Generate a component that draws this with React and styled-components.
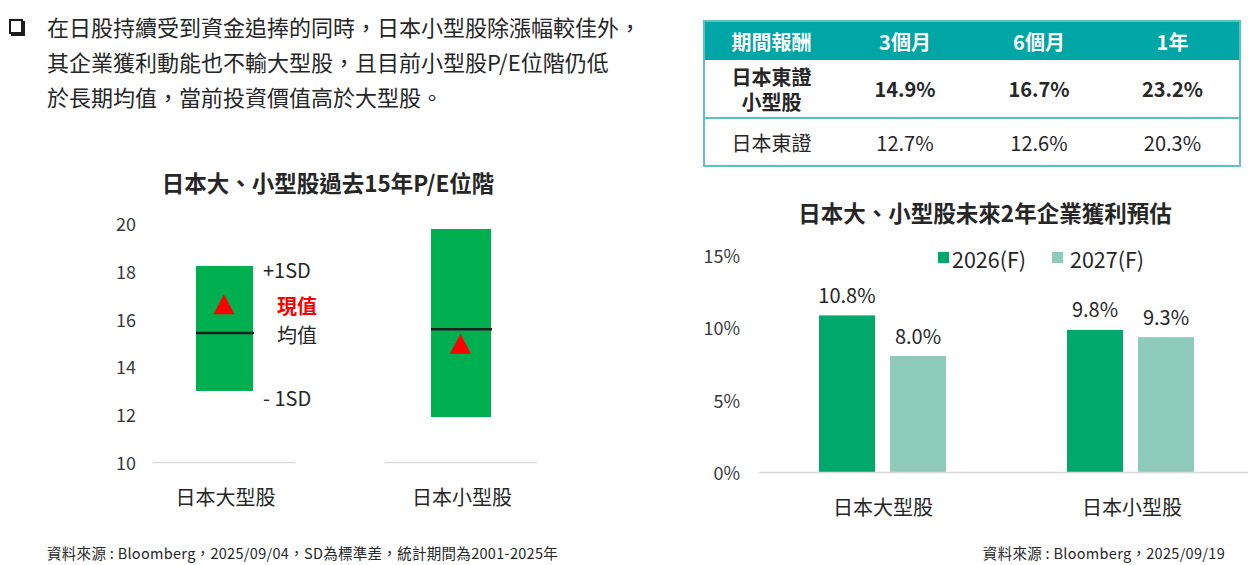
import styled, { createGlobalStyle } from "styled-components";

const GlobalStyle = createGlobalStyle`
  html, body {
    margin: 0;
    padding: 0;
    background: #fff;
  }
  body {
    font-family: "Noto Sans CJK TC", "Noto Sans", sans-serif;
    color: #262626;
  }
`;

const introLines = [
  "在日股持續受到資金追捧的同時，日本小型股除漲幅較佳外，",
  "其企業獲利動能也不輸大型股，且目前小型股P/E位階仍低",
  "於長期均值，當前投資價值高於大型股。",
];

const returnsTable = {
  head: ["期間報酬", "3個月", "6個月", "1年"],
  rows: [
    { label: ["日本東證", "小型股"], values: ["14.9%", "16.7%", "23.2%"], strong: true },
    { label: ["日本東證"], values: ["12.7%", "12.6%", "20.3%"], strong: false },
  ],
};

// P/E chart: y = 265 - (pe - 10) * 23.9 inside the svg
const peY = (v) => 265 - (v - 10) * 23.9;
const peBands = [
  { name: "日本大型股", x: 96, w: 57, hi: 18.2, lo: 12.97, mean: 15.4, now: 16.6, cx: 125.5 },
  { name: "日本小型股", x: 331, w: 60, hi: 19.75, lo: 11.88, mean: 15.55, now: 14.95, cx: 362 },
];

// earnings chart: 0% at y 245, 14.5px per percent
const epsY = (v) => 245 - v * 14.5;
const epsGroups = [
  { name: "日本大型股", cx: 183, bars: [{ x: 119, v: 10.8 }, { x: 190, v: 8.0 }] },
  { name: "日本小型股", cx: 432, bars: [{ x: 367, v: 9.8 }, { x: 438, v: 9.3 }] },
];
const epsColors = ["#00a86b", "#8fcbbb"];

function PeChart() {
  return (
    <svg width="456" height="325" viewBox="0 0 456 325">
      {[20, 18, 16, 14, 12, 10].map((t) => (
        <AxisText key={t} x="36" y={peY(t)} textAnchor="end" dominantBaseline="central">
          {t}
        </AxisText>
      ))}
      <line x1="53" x2="195" y1="265.5" y2="265.5" stroke="#d9d9d9" strokeWidth="1.5" />
      <line x1="285" x2="437" y1="265.5" y2="265.5" stroke="#d9d9d9" strokeWidth="1.5" />
      {peBands.map((b) => {
        const top = peY(b.hi);
        const ny = peY(b.now);
        return (
          <g key={b.name}>
            <rect x={b.x} y={top} width={b.w} height={peY(b.lo) - top} fill="#00b050" />
            <line x1={b.x} x2={b.x + b.w + 1} y1={peY(b.mean)} y2={peY(b.mean)} stroke="#1f1f1f" strokeWidth="2.5" />
            <polygon
              points={`${b.cx - 1.5 - 10.5},${ny + 10} ${b.cx - 1.5 + 10.5},${ny + 10} ${b.cx - 1.5},${ny - 10}`}
              fill="#ff0000"
            />
            <LabelText x={b.cx} y="299" textAnchor="middle" dominantBaseline="central">
              {b.name}
            </LabelText>
          </g>
        );
      })}
      <LabelText x="163" y="72" dominantBaseline="central">+1SD</LabelText>
      <LabelText x="177" y="108" dominantBaseline="central" $color="#ff0000" $bold>現值</LabelText>
      <LabelText x="177" y="137" dominantBaseline="central">均值</LabelText>
      <LabelText x="163" y="200" dominantBaseline="central">- 1SD</LabelText>
    </svg>
  );
}

function EpsChart() {
  return (
    <svg width="548" height="297" viewBox="0 0 548 297">
      {[15, 10, 5, 0].map((t) => (
        <AxisText key={t} x="40" y={epsY(t)} textAnchor="end" dominantBaseline="central">
          {t}%
        </AxisText>
      ))}
      <rect x="238" y="25" width="11" height="11" fill={epsColors[0]} />
      <LabelText x="252" y="31" dominantBaseline="central" $size={21.5}>2026(F)</LabelText>
      <rect x="352" y="25" width="11" height="11" fill={epsColors[1]} />
      <LabelText x="370" y="31" dominantBaseline="central" $size={21.5}>2027(F)</LabelText>
      {epsGroups.map((g) => (
        <g key={g.name}>
          {g.bars.map((b, i) => (
            <g key={b.x}>
              <rect x={b.x} y={epsY(b.v)} width="56" height={b.v * 14.5} fill={epsColors[i]} />
              <LabelText x={b.x + 28} y={epsY(b.v) - 21} textAnchor="middle" dominantBaseline="central">
                {b.v.toFixed(1)}%
              </LabelText>
            </g>
          ))}
          <LabelText x={g.cx} y="279" textAnchor="middle" dominantBaseline="central">
            {g.name}
          </LabelText>
        </g>
      ))}
      <line x1="59" x2="548" y1="245.5" y2="245.5" stroke="#d9d9d9" strokeWidth="1.5" />
    </svg>
  );
}

export default function App() {
  return (
    <Page>
      <GlobalStyle />
      <Main>
        <LeftCol>
          <Intro>
            <Bullet />
            <IntroText>
              {introLines.map((l) => (
                <div key={l}>{l}</div>
              ))}
            </IntroText>
          </Intro>
          <PeBlock>
            <ChartTitle>日本大、小型股過去15年P/E位階</ChartTitle>
            <PeChart />
          </PeBlock>
        </LeftCol>
        <RightCol>
          <Table>
            <thead>
              <tr>
                {returnsTable.head.map((h) => (
                  <HeadCell key={h}>{h}</HeadCell>
                ))}
              </tr>
            </thead>
            <tbody>
              {returnsTable.rows.map((r, ri) => (
                <Row key={r.label.join("")} $strong={r.strong}>
                  <Cell $divider={ri > 0}>
                    {r.label.map((l) => (
                      <div key={l}>{l}</div>
                    ))}
                  </Cell>
                  {r.values.map((v, i) => (
                    <Cell key={i} $divider={ri > 0}>
                      {v}
                    </Cell>
                  ))}
                </Row>
              ))}
            </tbody>
          </Table>
          <EpsBlock>
            <ChartTitle $shift={22}>日本大、小型股未來2年企業獲利預估</ChartTitle>
            <EpsChart />
          </EpsBlock>
        </RightCol>
      </Main>
      <Footer>
        <Note>資料來源 : Bloomberg，2025/09/04，SD為標準差，統計期間為2001-2025年</Note>
        <Note>資料來源 : Bloomberg，2025/09/19</Note>
      </Footer>
    </Page>
  );
}

const Page = styled.div`
  width: 1248px;
  height: 565px;
  display: flex;
  flex-direction: column;
  overflow: hidden;
`;

const Main = styled.div`
  display: grid;
  grid-template-columns: 700px 548px;
  flex: 1;
`;

const LeftCol = styled.div`
  display: flex;
  flex-direction: column;
`;

const Intro = styled.div`
  display: flex;
  align-items: flex-start;
  padding: 9px 0 0 9px;
`;

const Bullet = styled.span`
  width: 10px;
  height: 11px;
  margin-top: 10px;
  border: 2px solid #1a1a1a;
  box-shadow: 2px 2px 0 #1a1a1a;
  flex: none;
`;

const IntroText = styled.div`
  margin-left: 24px;
  font-size: 22px;
  line-height: 35px;
  color: #262626;
  white-space: nowrap;
`;

const PeBlock = styled.div`
  margin: 53px 0 0 100px;
  width: 456px;
`;

const ChartTitle = styled.div`
  font-size: 22.5px;
  line-height: 30px;
  font-weight: 700;
  color: #262626;
  text-align: center;
  padding-left: ${(p) => (p.$shift ? `${p.$shift}px` : 0)};
`;

const AxisText = styled.text`
  font-family: "Noto Sans CJK TC", "Noto Sans", sans-serif;
  font-size: 18px;
  fill: #3a3a3a;
`;

const LabelText = styled.text`
  font-family: "Noto Sans CJK TC", "Noto Sans", sans-serif;
  font-size: ${(p) => p.$size || 20}px;
  font-weight: ${(p) => (p.$bold ? 700 : 400)};
  fill: ${(p) => p.$color || "#262626"};
`;

const RightCol = styled.div`
  display: flex;
  flex-direction: column;
  padding-top: 20px;
`;

const Table = styled.table`
  margin-left: 3px;
  width: 538px;
  border-collapse: collapse;
  table-layout: fixed;
  border: 2px solid #5cc2c2;
`;

const HeadCell = styled.th`
  height: 38px;
  padding: 0;
  background: #00a5a5;
  color: #fff;
  font-size: 20px;
  font-weight: 700;
  text-align: center;
`;

const Row = styled.tr`
  height: ${(p) => (p.$strong ? "58px" : "48px")};
  font-weight: ${(p) => (p.$strong ? 700 : 400)};
`;

const Cell = styled.td`
  padding: 0;
  text-align: center;
  font-size: 20px;
  line-height: 25px;
  color: #262626;
  border-top: ${(p) => (p.$divider ? "2px solid #5cc2c2" : "none")};
`;

const EpsBlock = styled.div`
  margin-top: 30px;
`;

const Footer = styled.div`
  display: flex;
  justify-content: space-between;
  align-items: center;
  height: 25px;
  padding: 0 23px 0 47px;
`;

const Note = styled.div`
  font-size: 14.5px;
  letter-spacing: 0.3px;
  color: #262626;
  white-space: nowrap;
`;
